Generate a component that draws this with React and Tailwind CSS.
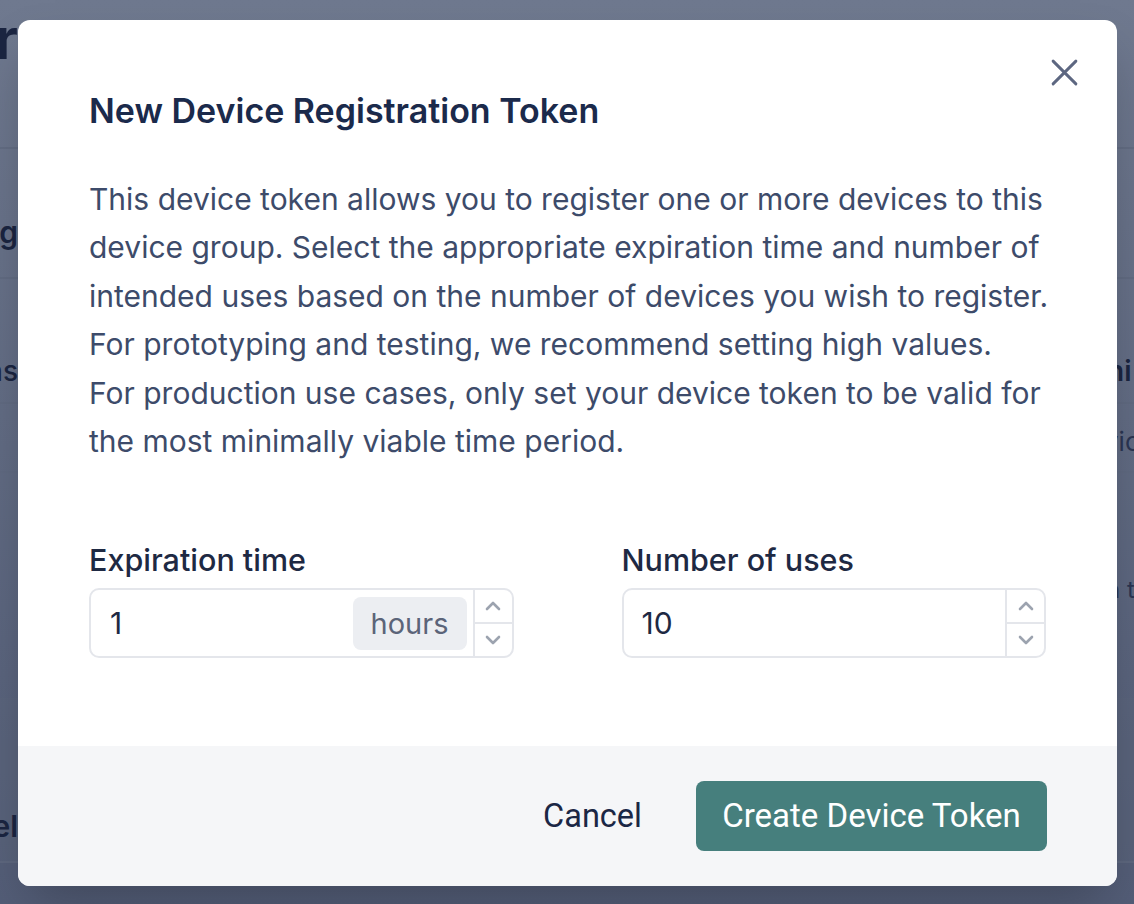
import React from "react";

function Chevron({ up }) {
  return (
    <svg width="18" height="12" viewBox="0 0 18 12" fill="none" stroke="#9ca3af" strokeWidth="2.6" strokeLinecap="round" strokeLinejoin="round">
      {up ? <path d="M3 9 L9 3 L15 9" /> : <path d="M3 3 L9 9 L15 3" />}
    </svg>
  );
}

function Spinner() {
  return (
    <div className="flex flex-col w-[39px] border-l-2 border-[#e4e6eb] shrink-0">
      <div className="flex-1 flex items-center justify-center border-b-2 border-[#e4e6eb]">
        <Chevron up />
      </div>
      <div className="flex-1 flex items-center justify-center">
        <Chevron />
      </div>
    </div>
  );
}

function BgRow({ h, left, right, border = true, bg = "" }) {
  return (
    <div className={`flex justify-between items-end ${bg} ${border ? "border-b-2 border-[#5f6a80]/70" : ""}`} style={{ height: h }}>
      <div className="w-[18px] overflow-hidden flex justify-end">
        <span className="whitespace-nowrap">{left}</span>
      </div>
      <div className="w-[30px] overflow-hidden flex justify-start">
        <span className="whitespace-nowrap">{right}</span>
      </div>
    </div>
  );
}

export default function App() {
  const font = { fontFamily: "Inter, 'Noto Sans', sans-serif" };
  return (
    <div className="relative w-[1134px] h-[904px] overflow-hidden bg-gradient-to-b from-[#6f798f] to-[#535d77]" style={font}>
      {/* background page (dimmed) */}
      <div className="flex flex-col text-[#1b2541]">
        <BgRow h={149} left={<span className="text-[56px] font-semibold leading-none inline-block pb-[80px]">r</span>} right="" />
        <BgRow h={130} left={<span className="text-[30px] font-semibold inline-block pb-[22px]">g</span>} right="" />
        <BgRow h={125} left={<span className="text-[28px] font-medium inline-block pb-[10px]">ns</span>} right={<span className="text-[28px] font-semibold inline-block pb-[10px] pl-[3px]">hi</span>} />
        <BgRow h={69} left="" right={<span className="text-[26px] text-[#2a3552] inline-block pb-[10px]">vic</span>} />
        <BgRow h={225} border={false} left="" right={<span className="text-[24px] text-[#2a3552] inline-block pb-[90px] pl-[2px]">n t</span>} />
        <BgRow h={165} bg="bg-[#5c667d]/40" left={<span className="text-[30px] font-semibold inline-block pb-[12px]">el</span>} right="" />
      </div>

      {/* overlay modal */}
      <div className="absolute left-[18px] top-[20px] w-[1099px] h-[866px] bg-white rounded-[12px] shadow-2xl flex flex-col overflow-hidden">
        <button className="absolute top-[37px] right-[38px] w-[30px] h-[30px] flex items-center justify-center">
          <svg width="29" height="29" viewBox="0 0 28 28" fill="none" stroke="#5d6781" strokeWidth="2.8" strokeLinecap="round">
            <path d="M3 3 L25 25 M25 3 L3 25" />
          </svg>
        </button>

        <div className="flex-1 px-[71px] pt-[71px]">
          <h2 className="text-[34px] leading-[40px] font-semibold text-[#1b2a4b]">New Device Registration Token</h2>
          <p className="mt-[44px] mr-[-8px] text-[30px] leading-[48.4px] text-[#3d4b6a]">
            This device token allows you to register one or more devices to this device group. Select the appropriate expiration time and number of intended uses based on the number of devices you wish to register.<br />
            For prototyping and testing, we recommend setting high values.<br />
            For production use cases, only set your device token to be valid for the most minimally viable time period.
          </p>

          <div className="mt-[77px] grid grid-cols-2 gap-[108px]">
            <div className="flex flex-col">
              <label className="text-[30.5px] leading-[36px] font-medium text-[#1e2943]">Expiration time</label>
              <div className="mt-[10px] h-[70px] flex border-2 border-[#e4e6eb] rounded-[10px] overflow-hidden">
                <div className="flex-1 flex items-center pl-[19px] pr-[6px]">
                  <span className="flex-1 text-[30px] text-[#1e2943]">1</span>
                  <span className="h-[53px] px-[18px] flex items-center bg-[#eceef2] rounded-[8px] text-[29px] text-[#5b6479]">hours</span>
                </div>
                <Spinner />
              </div>
            </div>
            <div className="flex flex-col">
              <label className="text-[30.5px] leading-[36px] font-medium text-[#1e2943]">Number of uses</label>
              <div className="mt-[10px] h-[70px] flex border-2 border-[#e4e6eb] rounded-[10px] overflow-hidden">
                <div className="flex-1 flex items-center pl-[18px]">
                  <span className="text-[30px] text-[#1e2943]">10</span>
                </div>
                <Spinner />
              </div>
            </div>
          </div>
        </div>

        <div className="h-[140px] bg-[#f5f6f8] flex items-center justify-end pr-[70px] gap-[54px]" style={{ fontFamily: "Roboto, 'Noto Sans', sans-serif" }}>
          <button className="text-[32.5px] text-[#1b2745] font-normal">Cancel</button>
          <button className="w-[351px] h-[70px] rounded-[8px] bg-[#467f7d] text-white text-[33px] font-normal">Create Device Token</button>
        </div>
      </div>
    </div>
  );
}
